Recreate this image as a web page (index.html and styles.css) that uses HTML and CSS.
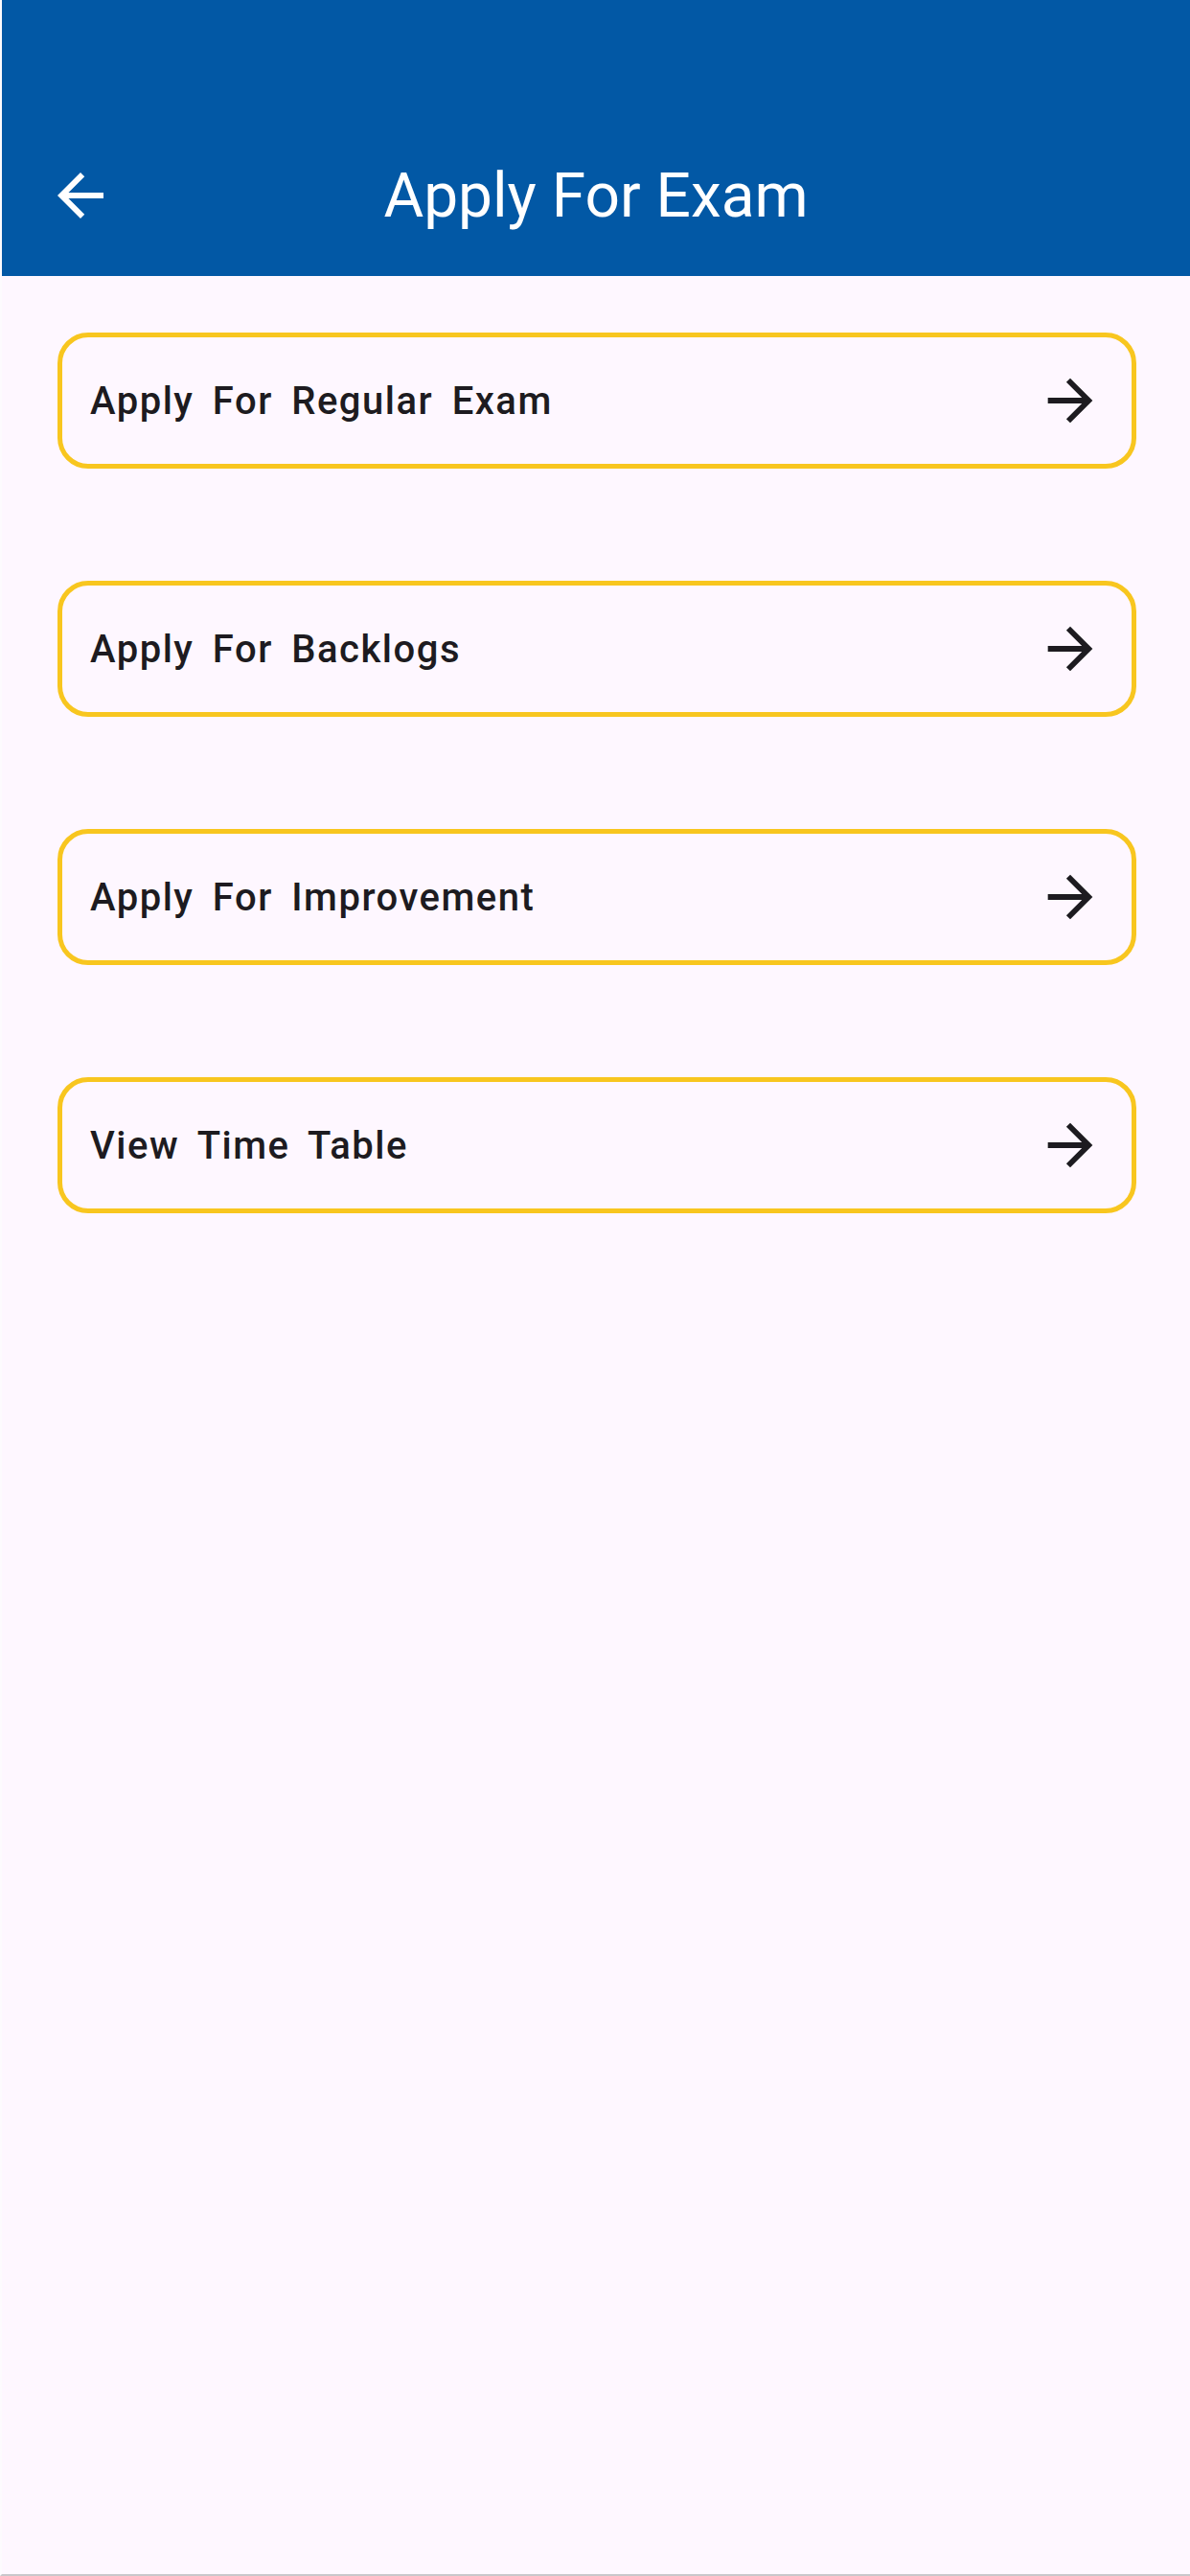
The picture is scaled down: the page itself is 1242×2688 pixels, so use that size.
FILE: index.html
```html
<!DOCTYPE html>
<html lang="en">

    <head>
        <meta charset="UTF-8">
        <meta name="viewport" content="width=device-width, initial-scale=1.0">
        <title>Apply For Exam</title>

        <link rel="stylesheet" href="styles.css">
    </head>

    <body>

        <header class="app_bar">
            <div class="status_bar"></div>
            <div class="toolbar">
                <button class="back_button" aria-label="Back">
                    <svg viewBox="0 0 24 24" width="72" height="72">
                        <path d="M20 11H7.83l5.59-5.59L12 4l-8 8 8 8 1.41-1.41L7.83 13H20v-2z"/>
                    </svg>
                </button>
                <h1 class="title">Apply For Exam</h1>
            </div>
        </header>

        <main class="menu_list">
            <a class="menu_item" href="#">
                <span>Apply For Regular Exam</span>
                <svg viewBox="0 0 24 24" width="70" height="70">
                    <path d="M12 4l-1.41 1.41L16.17 11H4v2h12.17l-5.58 5.59L12 20l8-8z"/>
                </svg>
            </a>
            <a class="menu_item" href="#">
                <span>Apply For Backlogs</span>
                <svg viewBox="0 0 24 24" width="70" height="70">
                    <path d="M12 4l-1.41 1.41L16.17 11H4v2h12.17l-5.58 5.59L12 20l8-8z"/>
                </svg>
            </a>
            <a class="menu_item" href="#">
                <span>Apply For Improvement</span>
                <svg viewBox="0 0 24 24" width="70" height="70">
                    <path d="M12 4l-1.41 1.41L16.17 11H4v2h12.17l-5.58 5.59L12 20l8-8z"/>
                </svg>
            </a>
            <a class="menu_item" href="#">
                <span>View Time Table</span>
                <svg viewBox="0 0 24 24" width="70" height="70">
                    <path d="M12 4l-1.41 1.41L16.17 11H4v2h12.17l-5.58 5.59L12 20l8-8z"/>
                </svg>
            </a>
        </main>

    </body>

</html>
```

FILE: styles.css
```css
html,
body {
    margin: 0;
    height: 100%;
}

body {
    background-color: #fef7ff;
    font-family: Roboto, "Noto Sans", sans-serif;
    color: #1d1b20;
    border-left: 2px solid #fdfbfe;
    border-bottom: 2px solid #c9c7cb;
    box-sizing: border-box;
}

.app_bar {
    background-color: #0258a5;
}

.status_bar {
    height: 120px;
}

.toolbar {
    height: 168px;
    display: flex;
    align-items: center;
    justify-content: center;
    position: relative;
}

.back_button {
    position: absolute;
    left: 46px;
    top: 48px;
    background: none;
    border: none;
    padding: 0;
    display: flex;
}

.back_button svg {
    fill: #ffffff;
}

.title {
    margin: 0;
    font-size: 64px;
    font-weight: 400;
    color: #ffffff;
}

.menu_list {
    display: flex;
    flex-direction: column;
    gap: 117px;
    padding: 59px 56px 0 58px;
}

.menu_item {
    height: 142px;
    box-sizing: border-box;
    border: 5px solid #f8c61f;
    border-radius: 32px;
    display: flex;
    align-items: center;
    justify-content: space-between;
    padding: 0 29px 0 29px;
    text-decoration: none;
    color: #1d1b20;
}

.menu_item span {
    font-size: 40px;
    font-weight: 500;
    letter-spacing: 1.5px;
    word-spacing: 8px;
}

.menu_item svg {
    fill: #1d1b20;
}
```
